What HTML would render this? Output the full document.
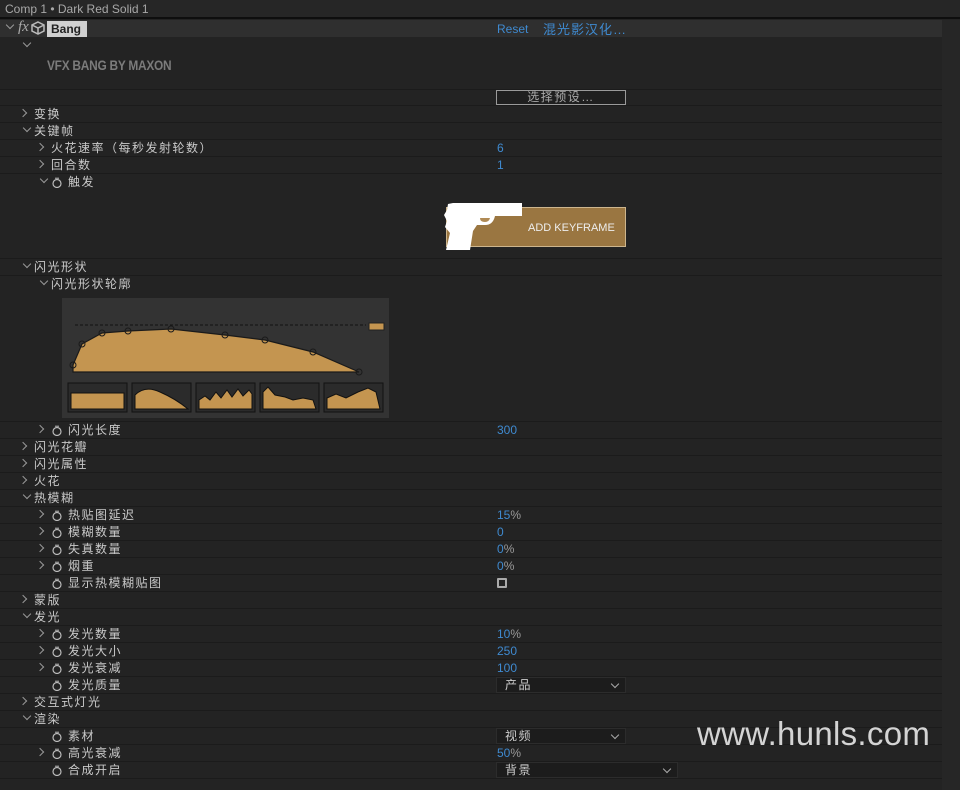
<!DOCTYPE html>
<html><head><meta charset="utf-8"><style>
*{margin:0;padding:0;box-sizing:border-box}
body{width:960px;height:790px;background:#232323;font-family:"Liberation Sans","Noto Sans CJK SC",sans-serif;font-size:12px;color:#c9c9c9;position:relative;overflow:hidden}
.a{position:absolute}
.row{position:absolute;left:0;width:942px;height:17px;border-bottom:1px solid #1b1b1b}
.t{position:absolute;top:0;line-height:16px;white-space:nowrap;letter-spacing:1.5px}
.v{position:absolute;left:497px;top:0;line-height:17px;color:#3f8ad0}
.v span{color:#9a9a9a}
.ch{position:absolute;top:4px;width:6px;height:6px;border-right:1px solid #999;border-bottom:1px solid #999}
.r{transform:rotate(-45deg)}
.d{transform:rotate(45deg);top:2px}
.sw{position:absolute;top:3px;width:10px;height:11px}
.dd{position:absolute;height:16px;top:0;background:#1c1c1c;border:1px solid #2c2c2c;color:#ccc;line-height:14px;padding-left:8px;letter-spacing:1.5px}
.dd:after{content:"";position:absolute;right:7px;top:3px;width:5px;height:5px;border-right:1px solid #aaa;border-bottom:1px solid #aaa;transform:rotate(45deg)}
</style></head><body>
<div class="a" style="left:0;top:0;width:960px;height:19px;background:#262626;border-bottom:2px solid #0e0e0e"></div>
<div class="a" style="left:5px;top:2px;color:#a8a8a8;font-size:12px">Comp 1 • Dark Red Solid 1</div>
<div class="a" style="left:942px;top:20px;width:18px;height:770px;background:#262626"></div>
<div class="a" style="left:0;top:20px;width:942px;height:17px;background:#2f2f2f"></div>
<div class="ch d a" style="left:7px;top:22px"></div>
<div class="a" style="left:18px;top:19px;font-style:italic;font-family:'Liberation Serif',serif;font-size:15px;color:#aaa">fx</div>
<svg class="a" style="left:31px;top:21px" width="14" height="14" viewBox="0 0 14 14"><path d="M7 1L13 4V10L7 13L1 10V4Z M1 4L7 7L13 4 M7 7V13" fill="none" stroke="#bbb" stroke-width="1.5"/></svg>
<div class="a" style="left:47px;top:21px;width:40px;height:16px;background:#d0d0d0;color:#222;font-weight:bold;padding-left:4px;line-height:16px">Bang</div>
<div class="a" style="left:497px;top:22px;color:#3f8ad0;font-size:12px">Reset</div>
<div class="a" style="left:543px;top:19px;color:#3f8ad0;font-size:13px;letter-spacing:1px">混光影汉化…</div>
<div class="ch d a" style="left:24px;top:40px"></div>
<div class="a" style="left:47px;top:57px;color:#7b7b7b;font-weight:bold;font-size:14px;letter-spacing:-0.3px;transform:scaleX(0.85);transform-origin:left">VFX BANG BY MAXON</div>
<div class="a" style="left:0;top:89px;width:942px;height:1px;background:#1b1b1b"></div>
<div class="a" style="left:0;top:105px;width:942px;height:1px;background:#1b1b1b"></div>
<div class="a" style="left:496px;top:90px;width:130px;height:15px;border:1px solid #9a9a9a;background:#1f1f1f;color:#aaa;text-align:center;line-height:13px;letter-spacing:1.5px">选择预设…</div>

<div class="row" style="top:106px"><div class="ch r" style="left:20px"></div><div class="t" style="left:34px">变换</div></div>
<div class="row" style="top:123px"><div class="ch d" style="left:24px"></div><div class="t" style="left:34px">关键帧</div></div>
<div class="row" style="top:140px"><div class="ch r" style="left:37px"></div><div class="t" style="left:51px">火花速率（每秒发射轮数）</div><div class="v">6</div></div>
<div class="row" style="top:157px"><div class="ch r" style="left:37px"></div><div class="t" style="left:51px">回合数</div><div class="v">1</div></div>
<div class="row" style="top:174px;border:none"><div class="ch d" style="left:41px"></div><svg class="sw" style="left:52px" viewBox="0 0 10 11"><circle cx="5" cy="6.5" r="4" fill="none" stroke="#bbb" stroke-width="1.2"/><path d="M3 1.2H7" stroke="#bbb"/></svg><div class="t" style="left:68px">触发</div></div>
<div class="a" style="left:0;top:258px;width:942px;height:1px;background:#1b1b1b"></div>
<div class="a" style="left:446px;top:207px;width:180px;height:40px;background:#9a7641;border:1px solid #cdb58d"></div>
<div class="a" style="left:528px;top:222px;color:#eee;font-size:11px">ADD KEYFRAME</div>
<svg class="a" style="left:443px;top:202px" width="82" height="50" viewBox="0 0 82 50"><path d="M5 2L10 1H79V14H52Q50 23 42 23H34L30 29L27 48H3L7 31L2 25L4 19L1 13L4 8Z" fill="#fff"/><path d="M37 16Q37 20 42 20Q46 20 47 16Z" fill="#b08a55"/></svg>

<div class="row" style="top:259px"><div class="ch d" style="left:24px"></div><div class="t" style="left:34px">闪光形状</div></div>
<div class="row" style="top:276px;border:none"><div class="ch d" style="left:41px"></div><div class="t" style="left:51px">闪光形状轮廓</div></div>
<svg class="a" style="left:62px;top:298px" width="327" height="120" viewBox="62 298 327 120">
<rect x="62" y="298" width="327" height="120" fill="#333"/>
<path d="M75 325H366" stroke="#111" stroke-dasharray="3,2"/>
<rect x="369" y="323" width="15" height="7" fill="#c49550" stroke="#222"/>
<path d="M73 372L73 365L82 344L102 333L128 331L171 329L225 335L265 340L313 352L359 372Z" fill="#c49550" stroke="#1a1a1a" stroke-width="1.2"/>
<g fill="none" stroke="#1a1a1a"><circle cx="73" cy="365" r="3"/><circle cx="82" cy="344" r="3"/><circle cx="102" cy="333" r="3"/><circle cx="128" cy="331" r="3"/><circle cx="171" cy="329" r="3"/><circle cx="225" cy="335" r="3"/><circle cx="265" cy="340" r="3"/><circle cx="313" cy="352" r="3"/><circle cx="359" cy="372" r="3"/></g>
<g stroke="#111" fill="#2b2b2b"><rect x="68" y="383" width="59" height="29"/><rect x="132" y="383" width="59" height="29"/><rect x="196" y="383" width="59" height="29"/><rect x="260" y="383" width="59" height="29"/><rect x="324" y="383" width="59" height="29"/></g>
<g fill="#c49550" stroke="#111"><rect x="71" y="393" width="53" height="16"/>
<path d="M135 409V395Q145 385 160 392Q176 399 188 409Z"/>
<path d="M199 409V400L205 396L210 400L216 392L221 398L227 390L232 397L238 389L243 396L249 390L252 394V409Z"/>
<path d="M263 409V392L268 387L275 395L285 397L293 400L303 398L313 400L316 409Z"/>
<path d="M327 409V398L336 394L346 398L358 392L368 388L376 392L380 409Z"/></g>
</svg>
<div class="a" style="left:0;top:421px;width:942px;height:1px;background:#1b1b1b"></div>
<div class="row" style="top:422px"><div class="ch r" style="left:37px"></div><svg class="sw" style="left:52px" viewBox="0 0 10 11"><circle cx="5" cy="6.5" r="4" fill="none" stroke="#bbb" stroke-width="1.2"/><path d="M3 1.2H7" stroke="#bbb"/></svg><div class="t" style="left:68px">闪光长度</div><div class="v">300</div></div>
<div class="row" style="top:439px"><div class="ch r" style="left:20px"></div><div class="t" style="left:34px">闪光花瓣</div></div>
<div class="row" style="top:456px"><div class="ch r" style="left:20px"></div><div class="t" style="left:34px">闪光属性</div></div>
<div class="row" style="top:473px"><div class="ch r" style="left:20px"></div><div class="t" style="left:34px">火花</div></div>
<div class="row" style="top:490px"><div class="ch d" style="left:24px"></div><div class="t" style="left:34px">热模糊</div></div>
<div class="row" style="top:507px"><div class="ch r" style="left:37px"></div><svg class="sw" style="left:52px" viewBox="0 0 10 11"><circle cx="5" cy="6.5" r="4" fill="none" stroke="#bbb" stroke-width="1.2"/><path d="M3 1.2H7" stroke="#bbb"/></svg><div class="t" style="left:68px">热贴图延迟</div><div class="v">15<span>%</span></div></div>
<div class="row" style="top:524px"><div class="ch r" style="left:37px"></div><svg class="sw" style="left:52px" viewBox="0 0 10 11"><circle cx="5" cy="6.5" r="4" fill="none" stroke="#bbb" stroke-width="1.2"/><path d="M3 1.2H7" stroke="#bbb"/></svg><div class="t" style="left:68px">模糊数量</div><div class="v">0</div></div>
<div class="row" style="top:541px"><div class="ch r" style="left:37px"></div><svg class="sw" style="left:52px" viewBox="0 0 10 11"><circle cx="5" cy="6.5" r="4" fill="none" stroke="#bbb" stroke-width="1.2"/><path d="M3 1.2H7" stroke="#bbb"/></svg><div class="t" style="left:68px">失真数量</div><div class="v">0<span>%</span></div></div>
<div class="row" style="top:558px"><div class="ch r" style="left:37px"></div><svg class="sw" style="left:52px" viewBox="0 0 10 11"><circle cx="5" cy="6.5" r="4" fill="none" stroke="#bbb" stroke-width="1.2"/><path d="M3 1.2H7" stroke="#bbb"/></svg><div class="t" style="left:68px">烟重</div><div class="v">0<span>%</span></div></div>
<div class="row" style="top:575px"><svg class="sw" style="left:52px" viewBox="0 0 10 11"><circle cx="5" cy="6.5" r="4" fill="none" stroke="#bbb" stroke-width="1.2"/><path d="M3 1.2H7" stroke="#bbb"/></svg><div class="t" style="left:68px">显示热模糊贴图</div><div class="a" style="left:497px;top:3px;width:10px;height:10px;border:2px solid #aaa;border-radius:1px"></div></div>
<div class="row" style="top:592px"><div class="ch r" style="left:20px"></div><div class="t" style="left:34px">蒙版</div></div>
<div class="row" style="top:609px"><div class="ch d" style="left:24px"></div><div class="t" style="left:34px">发光</div></div>
<div class="row" style="top:626px"><div class="ch r" style="left:37px"></div><svg class="sw" style="left:52px" viewBox="0 0 10 11"><circle cx="5" cy="6.5" r="4" fill="none" stroke="#bbb" stroke-width="1.2"/><path d="M3 1.2H7" stroke="#bbb"/></svg><div class="t" style="left:68px">发光数量</div><div class="v">10<span>%</span></div></div>
<div class="row" style="top:643px"><div class="ch r" style="left:37px"></div><svg class="sw" style="left:52px" viewBox="0 0 10 11"><circle cx="5" cy="6.5" r="4" fill="none" stroke="#bbb" stroke-width="1.2"/><path d="M3 1.2H7" stroke="#bbb"/></svg><div class="t" style="left:68px">发光大小</div><div class="v">250</div></div>
<div class="row" style="top:660px"><div class="ch r" style="left:37px"></div><svg class="sw" style="left:52px" viewBox="0 0 10 11"><circle cx="5" cy="6.5" r="4" fill="none" stroke="#bbb" stroke-width="1.2"/><path d="M3 1.2H7" stroke="#bbb"/></svg><div class="t" style="left:68px">发光衰减</div><div class="v">100</div></div>
<div class="row" style="top:677px"><svg class="sw" style="left:52px" viewBox="0 0 10 11"><circle cx="5" cy="6.5" r="4" fill="none" stroke="#bbb" stroke-width="1.2"/><path d="M3 1.2H7" stroke="#bbb"/></svg><div class="t" style="left:68px">发光质量</div><div class="dd" style="left:496px;width:130px">产品</div></div>
<div class="row" style="top:694px"><div class="ch r" style="left:20px"></div><div class="t" style="left:34px">交互式灯光</div></div>
<div class="row" style="top:711px"><div class="ch d" style="left:24px"></div><div class="t" style="left:34px">渲染</div></div>
<div class="row" style="top:728px"><svg class="sw" style="left:52px" viewBox="0 0 10 11"><circle cx="5" cy="6.5" r="4" fill="none" stroke="#bbb" stroke-width="1.2"/><path d="M3 1.2H7" stroke="#bbb"/></svg><div class="t" style="left:68px">素材</div><div class="dd" style="left:496px;width:130px">视频</div></div>
<div class="row" style="top:745px"><div class="ch r" style="left:37px"></div><svg class="sw" style="left:52px" viewBox="0 0 10 11"><circle cx="5" cy="6.5" r="4" fill="none" stroke="#bbb" stroke-width="1.2"/><path d="M3 1.2H7" stroke="#bbb"/></svg><div class="t" style="left:68px">高光衰减</div><div class="v">50<span>%</span></div></div>
<div class="row" style="top:762px"><svg class="sw" style="left:52px" viewBox="0 0 10 11"><circle cx="5" cy="6.5" r="4" fill="none" stroke="#bbb" stroke-width="1.2"/><path d="M3 1.2H7" stroke="#bbb"/></svg><div class="t" style="left:68px">合成开启</div><div class="dd" style="left:496px;width:182px">背景</div></div>
<div class="a" style="left:697px;top:715px;color:#d4d4d4;font-size:33px;letter-spacing:0.3px">www.hunls.com</div>
</body></html>
